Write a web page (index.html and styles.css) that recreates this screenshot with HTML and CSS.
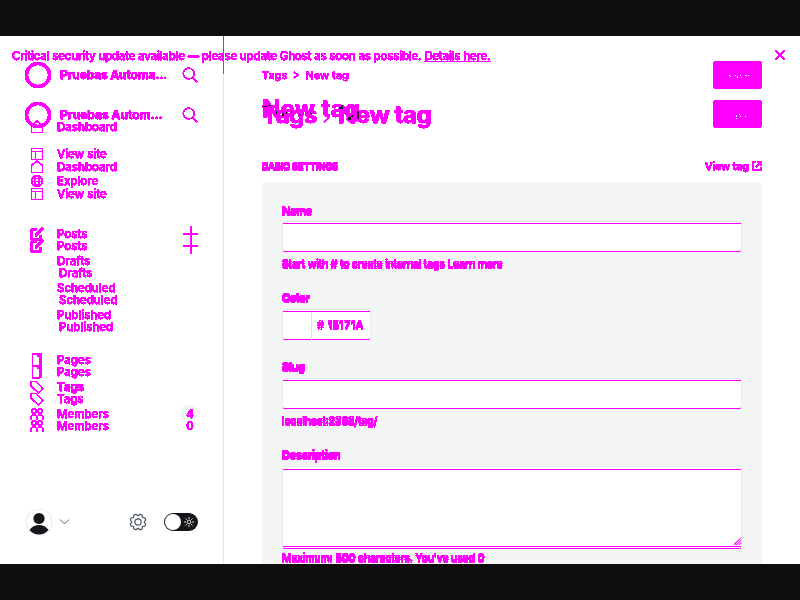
FILE: index.html
```html
<!DOCTYPE html>
<html lang="en">
<head>
<meta charset="utf-8">
<title>New tag</title>
<link rel="stylesheet" href="styles.css">
</head>
<body>
<svg class="defs" aria-hidden="true">
  <filter id="solid" x="0" y="0" width="100%" height="100%" color-interpolation-filters="sRGB"><feComponentTransfer><feFuncA type="linear" slope="20" intercept="-2"/></feComponentTransfer></filter>
  <symbol id="search" viewBox="0 0 16 16"><circle cx="6.700" cy="6.500" r="5.400"/><path d="M10.500 10.500 15 15"/></symbol>
  <symbol id="home" viewBox="0 0 14 14"><path d="M1.500 5.500 7 1l5.500 4.500v7h-11z"/></symbol>
  <symbol id="site" viewBox="0 0 14 14"><path d="M1.500 1.500h11v11h-11zM1.500 4.500h11M5.500 4.500v8"/></symbol>
  <symbol id="globe" viewBox="0 0 14 14"><circle cx="7" cy="7" r="5.500"/><ellipse cx="7" cy="7" rx="2.500" ry="5.500"/><path d="M1 7.500h12M2 4.500h10M2 10.500h10"/></symbol>
  <symbol id="edit" viewBox="0 0 14 14"><path d="M7 2.500H1.500v10h9V8M6 8.500V7l6-6 1 1-6 6zM5 9h2" stroke-width="1.600"/></symbol>
  <symbol id="page" viewBox="0 0 14 14"><path d="M2.500 1h9v10.500L9.500 13h-7zM9.500 1v12M8 1v2h3"/></symbol>
  <symbol id="tag" viewBox="0 0 14 14"><path d="M1 1.500h5l7 7L8.500 13 1 6z"/></symbol>
  <symbol id="people" viewBox="0 0 14 14"><circle cx="4" cy="4" r="2.200"/><circle cx="10" cy="4" r="2.200"/><path d="M1 13v-2q0-3 3-3t3 3v2M8 8q5-1 5 3v2"/></symbol>
</svg>
<div class="stage">
  <div class="sidebar-base">
    <span class="bubble"></span>
    <div class="user-bar">
      <svg class="avatar" viewBox="0 0 28 28"><circle cx="14" cy="14" r="13" fill="#fff" stroke="#ececed"/><circle cx="14" cy="10.500" r="5.600"/><path d="M4.500 22q3.500-5 9.500-5t9.500 5q-4 4.500-9.500 4.500T4.500 22z"/></svg>
      <svg class="chevron" viewBox="0 0 11 8"><path d="m1 1.500 4.500 4.500L10 1.500"/></svg>
      <svg class="gear" viewBox="0 0 18 18"><path d="m7 1.300 2 1.500 2-1.500 2.200.9.300 2.300 2.300.3.900 2.200L15.200 9l1.500 2-.9 2.200-2.300.3-.3 2.300-2.200.9-2-1.500-2 1.500-2.200-.9-.3-2.300-2.300-.3-.9-2.200 1.500-2-1.500-2 .9-2.200 2.300-.3.300-2.300z"/><circle cx="9" cy="9" r="3.200"/></svg>
      <div class="toggle"><span></span><svg viewBox="0 0 12 12"><circle cx="6" cy="6" r="1.900"/><path d="M6 1v2M6 9v2M1 6h2M9 6h2M2.500 2.500l1.300 1.300M8.200 8.200l1.300 1.300M9.500 2.500 8.200 3.800M3.800 8.200 2.500 9.500"/></svg></div>
    </div>
  </div>

  <div class="main-base">
    <div class="panel">
      <div class="label doubled solid">Name</div>
      <div class="field"><div></div></div>
      <div class="hint start doubled solid">Start with # to create internal tags Learn more</div>
      <div class="label color doubled solid">Color</div>
      <div class="field color-field"><div><i></i><span class="doubled solid"># 15171A</span></div></div>
      <div class="label slug doubled solid">Slug</div>
      <div class="field"><div></div></div>
      <div class="hint host doubled solid">localhost:2368/tag/</div>
      <div class="label desc doubled solid">Description</div>
      <div class="field area"><div><svg viewBox="0 0 8 9"><path d="M0 8 7.500.5M2.500 8.500 8 3M5.500 8.500 8 6M2 5.500v2.500"/></svg></div></div>
      <div class="hint maximum doubled solid">Maximum: <b>500</b> characters. You've used <b>0</b></div>
    </div>
  </div>

  <div class="layer first solid">
    <nav>
      <div class="site"><span class="logo"></span><b>Pruebas Automa...</b><svg><use href="#search"/></svg></div>
      <div class="row"><svg><use href="#home"/></svg>Dashboard</div>
      <div class="row"><svg><use href="#site"/></svg>View site</div>
      <div class="row"><svg><use href="#globe"/></svg>Explore</div>
      <div class="row posts"><svg><use href="#edit"/></svg>Posts<span class="plus"></span></div>
      <div class="row sub">Drafts</div>
      <div class="row sub">Scheduled</div>
      <div class="row sub">Published</div>
      <div class="row pages"><svg><use href="#page"/></svg>Pages</div>
      <div class="row bold"><svg><use href="#tag"/></svg>Tags</div>
      <div class="row"><svg><use href="#people"/></svg>Members<span class="count">4</span></div>
    </nav>
    <section>
      <div class="top"><div class="crumbs"><span>Tags</span><svg viewBox="0 0 6 8"><path d="m1 1 4 3-4 3"/></svg><span>New tag</span></div><div class="button"></div></div>
      <h1>New tag</h1>
      <div class="caption"><span class="doubled">BASIC SETTINGS</span><span class="view">View tag<svg viewBox="0 0 10 10"><path d="M4 1H1v8h8V6M5.500 1H9v3.500M9 1 4 6"/></svg></span></div>
    </section>
  </div>

  <div class="layer second solid">
    <nav>
      <div class="site"><span class="logo"></span><b>Pruebas Autom...</b><svg><use href="#search"/></svg></div>
      <div class="row"><svg><use href="#home"/></svg>Dashboard</div>
      <div class="row"><svg><use href="#site"/></svg>View site</div>
      <div class="row posts"><svg><use href="#edit"/></svg>Posts<span class="plus"></span></div>
      <div class="row sub">Drafts</div>
      <div class="row sub">Scheduled</div>
      <div class="row sub">Published</div>
      <div class="row pages"><svg><use href="#page"/></svg>Pages</div>
      <div class="row"><svg><use href="#tag"/></svg>Tags</div>
      <div class="row"><svg><use href="#people"/></svg>Members<span class="count">0</span></div>
    </nav>
    <section>
      <div class="top"><h1><span>Tags</span><svg viewBox="0 0 8 14"><path d="m1 13 6-6-3-5"/></svg><span>New tag</span></h1><div class="button"></div></div>
    </section>
  </div>

  <div class="layer notice solid">
    <div class="message">Critical security update available — please update Ghost as soon as possible. <u>Details here.</u></div>
    <svg viewBox="0 0 10 10"><path d="m.5.5 9 9M9.500.5l-9 9"/></svg>
  </div>
  <svg class="dots" viewBox="0 0 22 46"><path d="M0 2h1v1H0zM1 3h1v1H1zM6 2h1v1H6zM8 3h1v2H8zM11 2h1v1h-1zM12 4h1v1h-1zM16 2h2v1h-2zM19 2h1v1h-1zM7 42h1v2H7zM10 41h1v1h-1zM11 43h1v1h-1zM7 45h1v1H7zM16 43h1v1h-1z"/></svg>
  <svg class="specks" viewBox="0 0 100 20"><path d="M1 4h5v1H1zM6 3h3v1H6zM14 9h1v3h-1zM20 11h2v3h-2zM24 10h1v2h-1zM29 9h1v2h-1zM37 12h2v1h-2zM45 10h1v2h-1zM48 11h2v1h-2zM77 5h2v2h-2zM79 3h2v4h-2zM86 15h3v3h-3zM89 13h2v2h-2zM95 9h2v8h-2z"/></svg>
</div>
</body>
</html>
```

FILE: styles.css
```css
* { box-sizing: border-box; }
body {
  margin: 0;
  height: 600px;
  padding: 36px 0;
  background: #0e0e0e;
  overflow: hidden;
  font: 500 11.5px/14px Inter, sans-serif;
  color: #f0f;
}
.defs { position: absolute; width: 0; height: 0; }
svg { flex: none; overflow: visible; fill: none; stroke: #f0f; stroke-width: 1.2; }
.solid { filter: url(#solid); -webkit-text-stroke: .25px #f0f; }
.doubled { text-shadow: 0 2px #f0f; }
.stage {
  display: grid;
  grid-template: 528px / 224px 576px;
  width: 800px;
  background: #fff;
  overflow: hidden;
}

/* Layers share the same grid cells */
.sidebar-base {
  grid-area: 1 / 1;
  display: flex;
  flex-direction: column;
  border-right: 1px solid #e4e6e7;
  border-image: linear-gradient(#f0f 39px, #e4e6e7 39px) 1 / 0 1px 0 0;
  padding: 369px 25px 0;
}
.bubble { width: 18px; height: 18px; margin-left: auto; border-radius: 50%; background: #f1f3f4; }
.main-base { grid-area: 1 / 2; padding: 146px 38px 0; overflow: hidden; }
.layer { grid-area: 1 / 1 / 2 / 3; min-width: 0; min-height: 0; overflow: hidden; }
.first, .second { display: grid; grid-template-columns: 224px 1fr; }

.user-bar { display: flex; align-items: center; width: 173px; height: 28px; margin-top: 85px; }
.avatar { width: 28px; height: 28px; fill: #15171a; stroke: none; }
.chevron { width: 11px; height: 8px; margin-left: 6px; stroke: #626d79; stroke-width: 1; }
.gear { width: 18px; height: 18px; margin-left: 59px; stroke: #4b5560; stroke-width: 1.2; }
.toggle {
  display: flex;
  align-items: center;
  gap: 2px;
  width: 34px;
  height: 18px;
  margin-left: auto;
  padding: 1px;
  border-radius: 9px;
  background: #15171a;
}
.toggle span { width: 16px; height: 16px; border-radius: 50%; background: #fff; }
.toggle svg { width: 12px; height: 12px; stroke: #ddd; stroke-width: 1; }

nav { padding-top: 24px; }
.second nav { padding-top: 64px; }
.site { display: flex; align-items: center; height: 29px; padding: 0 25px; font-size: 12px; }
.site b { width: 121.5px; margin-left: 9px; font-weight: 700; letter-spacing: -.15px; white-space: nowrap; }
.second .site b { letter-spacing: 0; }
.site svg { width: 16px; height: 16px; }
.logo { width: 26px; height: 26px; border: 3px solid #f0f; border-radius: 50%; }
.row { display: flex; align-items: center; height: 27px; padding: 0 26px 0 30px; }
.row > svg { width: 14px; height: 14px; margin-right: 13px; }
.site + .row { margin-top: 24px; }
.row.posts { margin-top: 26px; }
.row.sub { padding-left: 57px; }
.row.pages { margin-top: 18px; }
.row.bold { font-weight: 700; }
.second .row.sub { padding-left: 59px; }
.second .posts { height: 26px; }
.second .pages { height: 27px; }
.plus {
  width: 15px;
  height: 15px;
  margin-left: auto;
  background: linear-gradient(#f0f, #f0f) 50% / 100% 2px no-repeat, linear-gradient(#f0f, #f0f) 50% / 2px 100% no-repeat;
}
.count { width: 16px; margin-left: auto; text-align: center; }

section { padding: 0 38px; }
.top { display: flex; justify-content: space-between; padding-top: 25px; }
.second .top { padding-top: 64px; }
.button { width: 49px; height: 28px; border-radius: 3px; background: #f0f; }
.crumbs { display: flex; align-items: center; height: 28px; font-size: 11px; }
.crumbs svg { width: 6px; height: 8px; margin: 0 6px; }
h1 { margin: 0; font: 700 24px/30px Inter, sans-serif; letter-spacing: -.3px; }
.first h1 { margin-top: 5px; letter-spacing: .3px; }
.second h1 { display: flex; align-items: center; height: 29px; letter-spacing: -.45px; }
.second h1 svg { width: 7px; height: 14px; margin: 4px 8px 0 6px; }
.caption { display: flex; justify-content: space-between; margin-top: 35px; font-size: 9.5px; font-weight: 600; letter-spacing: -.2px; }
.view { display: flex; align-items: center; font-size: 11px; letter-spacing: -.25px; }
.view svg { width: 10px; height: 10px; margin-left: 3px; }

.panel { height: 390px; padding: 21px 20px 0; background: #f4f6f6; border-radius: 3px; white-space: nowrap; }
.label { height: 18px; font-size: 11px; font-weight: 600; letter-spacing: -.25px; }
.label.color { margin-top: 19px; height: 19px; }
.label.slug { margin-top: 19px; height: 19px; }
.label.desc { margin-top: 19px; height: 19px; }
.hint { margin-top: 5px; height: 14px; font-size: 10.5px; letter-spacing: -.2px; }
.field { height: 31px; border: 1px solid #e7eaea; border-bottom-color: #f0f; border-radius: 3px; padding-top: 1px; background: #fff; }
.field > div { display: flex; align-items: center; height: 100%; border-top: 1px solid #f0f; }
.color-field { width: 89px; }
.color-field i { width: 1px; height: 28px; margin-left: 28px; background: #dfe2e3; }
.color-field span { margin: -4px 0 0 5px; font-size: 11px; line-height: 14px; letter-spacing: .25px; }
.area { height: 83px; padding: 2px 0 1px; }
.area > div { justify-content: flex-end; align-items: flex-end; border-bottom: 1px solid #f0f; }
.area svg { width: 7px; height: 9px; }
.hint.maximum { margin-top: 2px; }

.notice { display: flex; justify-content: space-between; align-items: flex-start; padding: 13px 15px 0 12px; white-space: nowrap; letter-spacing: -.2px; }
.notice svg { width: 10px; height: 10px; margin-top: 1px; }

/* Unchanged pixels that show through the highlighted areas */
.dots, .specks { position: relative; z-index: 1; grid-area: 1 / 2; stroke: none; }
.dots { width: 22px; height: 46px; margin: 37px 0 0 505px; fill: #fff; }
.specks { width: 100px; height: 20px; margin: 66px 0 0 38px; fill: #23202a; }
```
